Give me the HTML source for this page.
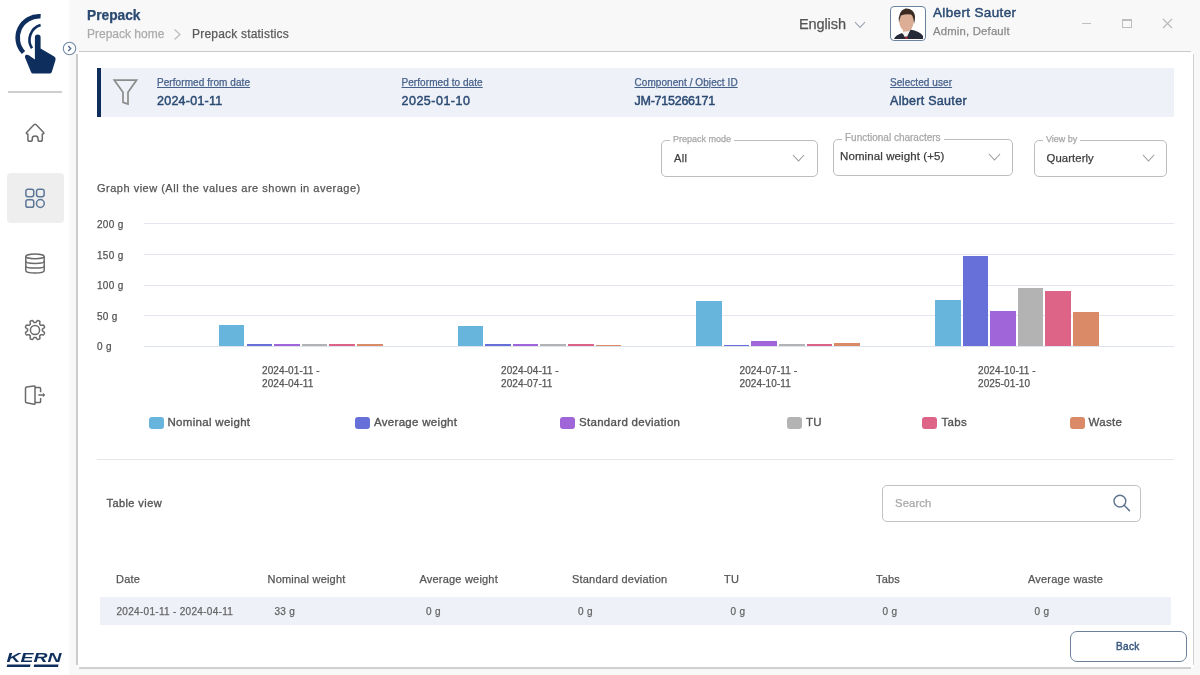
<!DOCTYPE html>
<html><head><meta charset="utf-8">
<style>
*{box-sizing:border-box;margin:0;padding:0}
html,body{width:1200px;height:675px;overflow:hidden}
body{position:relative;will-change:transform;-webkit-text-stroke-width:0.25px;background:#f8f8f8;font-family:"Liberation Sans",sans-serif;color:#555}
.a{position:absolute;white-space:nowrap;line-height:1}
#side{position:absolute;left:0;top:0;width:71px;height:675px;background:linear-gradient(to right,#fff 0,#fff 68px,#f8f8f8 71px)}
#card{position:absolute;left:77px;top:51.5px;width:1116.5px;height:616.5px;background:#fff}
.cl{position:absolute;background:#cbcbcb}
#fbar{position:absolute;left:97px;top:68px;width:1077px;height:49px;background:#eef1f8;border-left:4px solid #0e2d5c}
.fl{font-size:10px;color:#46618a;text-decoration:underline;text-decoration-thickness:0.8px;text-underline-offset:1px;letter-spacing:0.07px}
.fv{font-size:12.5px;color:#2b4a72;-webkit-text-stroke-width:0.45px;letter-spacing:0.3px}
.dd{position:absolute;border:1px solid #bdbdbd;border-radius:5px;background:#fff}
.ddl{position:absolute;font-size:9px;color:#a8a8a8;background:#fff;padding:0 3px;line-height:1}
.gl{position:absolute;left:144px;width:1030px;height:1px;background:#e3e6ee}
.yl{font-size:10px;color:#555;letter-spacing:0.3px;margin-top:1.2px}
.bar{position:absolute;width:25.6px}
.xl{font-size:10px;color:#555;line-height:13.5px;letter-spacing:0.1px;margin-top:1.5px}
.sw{position:absolute;width:15px;height:12px;border-radius:3px;top:417px}
.lg{font-size:11.5px;color:#555;-webkit-text-stroke-width:0.35px;letter-spacing:0.3px;margin-top:1.4px}
.th{font-size:11px;color:#555;letter-spacing:0.2px}
.td{font-size:10px;color:#666;letter-spacing:0.3px;margin-top:0.5px}
</style></head><body>
<div id="side"></div>

<!-- header -->
<div class="a" style="left:87px;top:9px;font-size:13.75px;font-weight:bold;color:#2b4a72">Prepack</div>
<div class="a" style="left:87px;top:27.5px;font-size:12px;color:#ababab">Prepack home</div>
<div class="a" style="left:192px;top:27.5px;font-size:12px;color:#5a5a5a;letter-spacing:0.2px">Prepack statistics</div>

<div class="a" style="left:799px;top:16.5px;font-size:14.5px;color:#555;letter-spacing:-0.1px">English</div>
<div class="a" style="left:933px;top:5.5px;font-size:13.5px;color:#2b4a72;-webkit-text-stroke-width:0.45px;letter-spacing:0.35px">Albert Sauter</div>
<div class="a" style="left:933px;top:25.5px;font-size:11.3px;color:#8a8a8a;letter-spacing:0.2px">Admin, Default</div>

<div id="card"></div>
<div class="cl" style="left:79px;top:50.5px;width:1111.5px;height:1.8px;background:#c9c9c9"></div>
<div class="cl" style="left:76px;top:53.5px;width:2px;height:611.5px"></div>
<div class="cl" style="left:1192.6px;top:54px;width:1.5px;height:611px;background:#d2d2d2"></div>
<div class="cl" style="left:79px;top:667.3px;width:1112px;height:1.7px;background:#d0d0d0"></div>
<div id="fbar"></div>


<!-- filter bar content -->
<svg class="a" style="left:112px;top:78px" width="27" height="28" viewBox="0 0 27 28"><path d="M2.2 2.1 H24.6 L16 14.3 V26 L11 24.3 V14.3 Z" fill="none" stroke="#8c8c8c" stroke-width="1.7" stroke-linejoin="miter"/></svg>
<div class="a fl" style="left:157px;top:78px">Performed from date</div>
<div class="a fv" style="left:157px;top:95px;letter-spacing:0.25px">2024-01-11</div>
<div class="a fl" style="left:401.5px;top:78px">Performed to date</div>
<div class="a fv" style="left:401.5px;top:95px;letter-spacing:0.5px">2025-01-10</div>
<div class="a fl" style="left:634.5px;top:78px">Component / Object ID</div>
<div class="a fv" style="left:634.5px;top:95px;letter-spacing:-0.25px">JM-715266171</div>
<div class="a fl" style="left:890px;top:78px">Selected user</div>
<div class="a fv" style="left:890px;top:95px">Albert Sauter</div>

<!-- dropdowns -->
<div class="dd" style="left:661px;top:140px;width:157px;height:37px"></div>
<div class="ddl" style="left:670px;top:135px">Prepack mode</div>
<div class="a" style="left:674px;top:153px;font-size:11px;color:#3d3d3d;letter-spacing:0.3px">All</div>
<svg class="a" style="left:792px;top:154px" width="13" height="8" viewBox="0 0 13 8"><path d="M1 1 L6.5 7 L12 1" fill="none" stroke="#999" stroke-width="1.1"/></svg>

<div class="dd" style="left:833px;top:139px;width:180px;height:37px"></div>
<div class="ddl" style="left:842px;top:133px;font-size:10px">Functional characters</div>
<div class="a" style="left:840px;top:151px;font-size:11.5px;color:#3d3d3d;letter-spacing:0.1px">Nominal weight (+5)</div>
<svg class="a" style="left:988px;top:153px" width="13" height="8" viewBox="0 0 13 8"><path d="M1 1 L6.5 7 L12 1" fill="none" stroke="#999" stroke-width="1.1"/></svg>

<div class="dd" style="left:1034px;top:140px;width:133px;height:37px"></div>
<div class="ddl" style="left:1043px;top:135px">View by</div>
<div class="a" style="left:1046.5px;top:153px;font-size:11.3px;color:#3d3d3d;letter-spacing:0.1px">Quarterly</div>
<svg class="a" style="left:1142px;top:154px" width="13" height="8" viewBox="0 0 13 8"><path d="M1 1 L6.5 7 L12 1" fill="none" stroke="#999" stroke-width="1.1"/></svg>

<!-- chart -->
<div class="a" style="left:97px;top:182.5px;font-size:11px;color:#555;letter-spacing:0.5px">Graph view (All the values are shown in average)</div>
<div class="gl" style="top:223px"></div>
<div class="gl" style="top:254px"></div>
<div class="gl" style="top:285px"></div>
<div class="gl" style="top:315px"></div>
<div class="gl" style="top:346px;background:#dde3ec"></div>
<div class="a yl" style="left:97px;top:219px">200 g</div>
<div class="a yl" style="left:97px;top:250px">150 g</div>
<div class="a yl" style="left:97px;top:280px">100 g</div>
<div class="a yl" style="left:97px;top:311px">50 g</div>
<div class="a yl" style="left:97px;top:341px">0 g</div>

<!-- bars -->
<div class="bar" style="left:218.90px;top:325.4px;height:20.6px;background:#67b5dc"></div>
<div class="bar" style="left:246.52px;top:344.2px;height:1.8px;background:#6670d8"></div>
<div class="bar" style="left:274.14px;top:344.2px;height:1.8px;background:#a065d8"></div>
<div class="bar" style="left:301.76px;top:344.2px;height:1.8px;background:#b3b3b3"></div>
<div class="bar" style="left:329.38px;top:344.2px;height:1.8px;background:#dd6487"></div>
<div class="bar" style="left:357.00px;top:344.2px;height:1.8px;background:#da8a67"></div>
<div class="bar" style="left:457.60px;top:325.7px;height:20.3px;background:#67b5dc"></div>
<div class="bar" style="left:485.22px;top:344.2px;height:1.8px;background:#6670d8"></div>
<div class="bar" style="left:512.84px;top:344.2px;height:1.8px;background:#a065d8"></div>
<div class="bar" style="left:540.46px;top:344.2px;height:1.8px;background:#b3b3b3"></div>
<div class="bar" style="left:568.08px;top:344.2px;height:1.8px;background:#dd6487"></div>
<div class="bar" style="left:595.70px;top:345.2px;height:0.8px;background:#da8a67"></div>
<div class="bar" style="left:696.20px;top:300.9px;height:45.1px;background:#67b5dc"></div>
<div class="bar" style="left:723.82px;top:344.6px;height:1.4px;background:#6670d8"></div>
<div class="bar" style="left:751.44px;top:341.2px;height:4.8px;background:#a065d8"></div>
<div class="bar" style="left:779.06px;top:344.2px;height:1.8px;background:#b3b3b3"></div>
<div class="bar" style="left:806.68px;top:344.2px;height:1.8px;background:#dd6487"></div>
<div class="bar" style="left:834.30px;top:343.3px;height:2.7px;background:#da8a67"></div>
<div class="bar" style="left:935.00px;top:299.7px;height:46.3px;background:#67b5dc"></div>
<div class="bar" style="left:962.62px;top:256.1px;height:89.9px;background:#6670d8"></div>
<div class="bar" style="left:990.24px;top:311.4px;height:34.6px;background:#a065d8"></div>
<div class="bar" style="left:1017.86px;top:287.9px;height:58.1px;background:#b3b3b3"></div>
<div class="bar" style="left:1045.48px;top:290.5px;height:55.5px;background:#dd6487"></div>
<div class="bar" style="left:1073.10px;top:312.2px;height:33.8px;background:#da8a67"></div>
<div class="a xl" style="left:262px;top:362px">2024-01-11 -<br>2024-04-11</div>
<div class="a xl" style="left:501px;top:362px">2024-04-11 -<br>2024-07-11</div>
<div class="a xl" style="left:739.5px;top:362px">2024-07-11 -<br>2024-10-11</div>
<div class="a xl" style="left:978px;top:362px">2024-10-11 -<br>2025-01-10</div>

<!-- legend -->
<div class="sw" style="left:148.5px;background:#67b5dc"></div>
<div class="a lg" style="left:167.5px;top:416px">Nominal weight</div>
<div class="sw" style="left:354.5px;background:#6670d8"></div>
<div class="a lg" style="left:374px;top:416px">Average weight</div>
<div class="sw" style="left:560px;background:#a065d8"></div>
<div class="a lg" style="left:579px;top:416px">Standard deviation</div>
<div class="sw" style="left:787px;background:#b3b3b3"></div>
<div class="a lg" style="left:806px;top:416px">TU</div>
<div class="sw" style="left:922px;background:#dd6487"></div>
<div class="a lg" style="left:941.5px;top:416px">Tabs</div>
<div class="sw" style="left:1069.5px;background:#da8a67"></div>
<div class="a lg" style="left:1088.5px;top:416px">Waste</div>
<div class="a" style="left:97px;top:459px;width:1077px;height:1px;background:#e6e6e6"></div>

<!-- table -->
<div class="a" style="left:106.5px;top:498px;font-size:11px;color:#555;-webkit-text-stroke-width:0.35px;letter-spacing:0.42px">Table view</div>
<div class="dd" style="left:882px;top:485px;width:259px;height:37px;border:1.3px solid #c2c2c2"></div>
<div class="a" style="left:895px;top:498px;font-size:11.3px;color:#a8a8a8;letter-spacing:0.1px">Search</div>
<svg class="a" style="left:1112px;top:494px" width="20" height="19" viewBox="0 0 20 19"><circle cx="7.9" cy="7.1" r="5.9" fill="none" stroke="#5f7590" stroke-width="1.4"/><path d="M12.1 11.3 L17.4 16.6" stroke="#5f7590" stroke-width="1.5" stroke-linecap="round"/></svg>

<div class="a th" style="left:116px;top:574px">Date</div>
<div class="a th" style="left:267.5px;top:574px">Nominal weight</div>
<div class="a th" style="left:419.5px;top:574px">Average weight</div>
<div class="a th" style="left:572px;top:574px">Standard deviation</div>
<div class="a th" style="left:724px;top:574px">TU</div>
<div class="a th" style="left:876px;top:574px">Tabs</div>
<div class="a th" style="left:1028px;top:574px">Average waste</div>
<div class="a" style="left:100px;top:597px;width:1071px;height:28px;background:#eef1f8"></div>
<div class="a td" style="left:116.5px;top:606px">2024-01-11 - 2024-04-11</div>
<div class="a td" style="left:274.5px;top:606px">33 g</div>
<div class="a td" style="left:426px;top:606px">0 g</div>
<div class="a td" style="left:578px;top:606px">0 g</div>
<div class="a td" style="left:730.5px;top:606px">0 g</div>
<div class="a td" style="left:882.5px;top:606px">0 g</div>
<div class="a td" style="left:1034.5px;top:606px">0 g</div>

<div class="a" style="left:1070px;top:631px;width:117px;height:31px;border:1.6px solid #6d8099;border-radius:7px;background:#fff"></div>
<div class="a" style="left:1116px;top:642px;font-size:10px;color:#3b5a80;-webkit-text-stroke-width:0.45px;letter-spacing:0.35px">Back</div>


<!-- sidebar content -->
<svg class="a" style="left:0;top:0" width="70" height="100" viewBox="0 0 70 100">
 <path d="M40.6 16.3 A21.5 21.5 0 0 0 23.5 52.5" fill="none" stroke="#0e2f5e" stroke-width="4.5"/>
 <path d="M40.6 25 A15.5 15.5 0 0 0 32 48.3" fill="none" stroke="#0e2f5e" stroke-width="2.6"/>
 <path d="M34.9 37.2 Q34.9 34.4 37.75 34.4 Q40.6 34.4 40.6 37.2 V48.5 L54.2 56.5 Q56.2 57.8 55.5 60 L51.8 72 Q51.2 73.5 49.5 73.5 H33 Q31.5 73.5 31 72 L25 57.5 Q24.5 55.5 26.2 54.8 Q27.6 54.3 28.8 55.3 L34.9 59.5 Z" fill="#0e2f5e"/>
</svg>
<div class="a" style="left:8px;top:91px;width:54px;height:1.5px;background:#cfcfcf"></div>

<svg class="a" style="left:24px;top:122px" width="22" height="22" viewBox="0 0 22 22"><path d="M3.9 12 Q1.6 12 2.6 10.4 L10 2.8 Q11.1 1.8 12.2 2.8 L19.6 10.4 Q20.6 12 18.3 12 V17.4 Q18.3 19.3 16.4 19.3 H15.9 Q14 19.3 14 17.4 V16.3 Q14 13.9 11.15 13.9 Q8.3 13.9 8.3 16.3 V17.4 Q8.3 19.3 6.4 19.3 H5.8 Q3.9 19.3 3.9 17.4 Z" fill="none" stroke="#6a6a6a" stroke-width="1.5" stroke-linejoin="round"/></svg>

<div class="a" style="left:6.5px;top:173px;width:57px;height:50px;background:#eeeeee;border-radius:4px"></div>
<svg class="a" style="left:24px;top:187px" width="22" height="23" viewBox="0 0 22 23"><g fill="none" stroke="#5c7798" stroke-width="1.5"><rect x="1.85" y="2.15" width="7.9" height="7.6" rx="2.2"/><rect x="12.55" y="2.15" width="7.6" height="7.6" rx="2.2"/><rect x="1.85" y="12.75" width="7.9" height="7.6" rx="2.2"/><circle cx="16.35" cy="16.5" r="3.9"/></g></svg>

<svg class="a" style="left:24px;top:253px" width="22" height="22" viewBox="0 0 22 22"><g fill="none" stroke="#6a6a6a" stroke-width="1.5"><ellipse cx="11" cy="3.4" rx="9.2" ry="2.3"/><path d="M1.8 3.4 V17.6 Q1.8 20.1 11 20.1 Q20.2 20.1 20.2 17.6 V3.4"/><path d="M1.8 8.3 Q1.8 10.5 11 10.5 Q20.2 10.5 20.2 8.3"/><path d="M1.8 12.9 Q1.8 15.1 11 15.1 Q20.2 15.1 20.2 12.9"/></g></svg>

<svg class="a" style="left:23px;top:317.5px" width="24" height="24" viewBox="0 0 24 24"><g fill="none" stroke="#6a6a6a" stroke-width="1.5" stroke-linejoin="round"><path d="M19.45 12.00 L19.45 12.20 L19.44 12.39 L19.43 12.58 L19.41 12.78 L19.57 13.00 L19.94 13.26 L20.34 13.54 L20.73 13.86 L21.10 14.18 L21.43 14.53 L21.54 14.83 L21.46 15.07 L21.38 15.32 L21.29 15.57 L21.19 15.81 L21.09 16.05 L20.98 16.28 L20.87 16.52 L20.74 16.75 L20.45 16.88 L19.98 16.89 L19.48 16.86 L18.99 16.80 L18.51 16.73 L18.06 16.65 L17.79 16.69 L17.67 16.84 L17.54 16.99 L17.40 17.13 L17.27 17.27 L17.13 17.40 L16.99 17.54 L16.84 17.67 L16.69 17.79 L16.65 18.06 L16.73 18.51 L16.80 18.99 L16.86 19.48 L16.89 19.98 L16.88 20.45 L16.75 20.74 L16.52 20.87 L16.28 20.98 L16.05 21.09 L15.81 21.19 L15.57 21.29 L15.32 21.38 L15.07 21.46 L14.83 21.54 L14.53 21.43 L14.18 21.10 L13.86 20.73 L13.54 20.34 L13.26 19.94 L13.00 19.57 L12.78 19.41 L12.58 19.43 L12.39 19.44 L12.20 19.45 L12.00 19.45 L11.80 19.45 L11.61 19.44 L11.42 19.43 L11.22 19.41 L11.00 19.57 L10.74 19.94 L10.46 20.34 L10.14 20.73 L9.82 21.10 L9.47 21.43 L9.17 21.54 L8.93 21.46 L8.68 21.38 L8.43 21.29 L8.19 21.19 L7.95 21.09 L7.72 20.98 L7.48 20.87 L7.25 20.74 L7.12 20.45 L7.11 19.98 L7.14 19.48 L7.20 18.99 L7.27 18.51 L7.35 18.06 L7.31 17.79 L7.16 17.67 L7.01 17.54 L6.87 17.40 L6.73 17.27 L6.60 17.13 L6.46 16.99 L6.33 16.84 L6.21 16.69 L5.94 16.65 L5.49 16.73 L5.01 16.80 L4.52 16.86 L4.02 16.89 L3.55 16.88 L3.26 16.75 L3.13 16.52 L3.02 16.28 L2.91 16.05 L2.81 15.81 L2.71 15.57 L2.62 15.32 L2.54 15.07 L2.46 14.83 L2.57 14.53 L2.90 14.18 L3.27 13.86 L3.66 13.54 L4.06 13.26 L4.43 13.00 L4.59 12.78 L4.57 12.58 L4.56 12.39 L4.55 12.20 L4.55 12.00 L4.55 11.80 L4.56 11.61 L4.57 11.42 L4.59 11.22 L4.43 11.00 L4.06 10.74 L3.66 10.46 L3.27 10.14 L2.90 9.82 L2.57 9.47 L2.46 9.17 L2.54 8.93 L2.62 8.68 L2.71 8.43 L2.81 8.19 L2.91 7.95 L3.02 7.72 L3.13 7.48 L3.26 7.25 L3.55 7.12 L4.02 7.11 L4.52 7.14 L5.01 7.20 L5.49 7.27 L5.94 7.35 L6.21 7.31 L6.33 7.16 L6.46 7.01 L6.60 6.87 L6.73 6.73 L6.87 6.60 L7.01 6.46 L7.16 6.33 L7.31 6.21 L7.35 5.94 L7.27 5.49 L7.20 5.01 L7.14 4.52 L7.11 4.02 L7.12 3.55 L7.25 3.26 L7.48 3.13 L7.72 3.02 L7.95 2.91 L8.19 2.81 L8.43 2.71 L8.68 2.62 L8.93 2.54 L9.17 2.46 L9.47 2.57 L9.82 2.90 L10.14 3.27 L10.46 3.66 L10.74 4.06 L11.00 4.43 L11.22 4.59 L11.42 4.57 L11.61 4.56 L11.80 4.55 L12.00 4.55 L12.20 4.55 L12.39 4.56 L12.58 4.57 L12.78 4.59 L13.00 4.43 L13.26 4.06 L13.54 3.66 L13.86 3.27 L14.18 2.90 L14.53 2.57 L14.83 2.46 L15.07 2.54 L15.32 2.62 L15.57 2.71 L15.81 2.81 L16.05 2.91 L16.28 3.02 L16.52 3.13 L16.75 3.26 L16.88 3.55 L16.89 4.02 L16.86 4.52 L16.80 5.01 L16.73 5.49 L16.65 5.94 L16.69 6.21 L16.84 6.33 L16.99 6.46 L17.13 6.60 L17.27 6.73 L17.40 6.87 L17.54 7.01 L17.67 7.16 L17.79 7.31 L18.06 7.35 L18.51 7.27 L18.99 7.20 L19.48 7.14 L19.98 7.11 L20.45 7.12 L20.74 7.25 L20.87 7.48 L20.98 7.72 L21.09 7.95 L21.19 8.19 L21.29 8.43 L21.38 8.68 L21.46 8.93 L21.54 9.17 L21.43 9.47 L21.10 9.82 L20.73 10.14 L20.34 10.46 L19.94 10.74 L19.57 11.00 L19.41 11.22 L19.43 11.42 L19.44 11.61 L19.45 11.80 Z"/><circle cx="12" cy="12" r="4.6"/></g></svg>

<svg class="a" style="left:24px;top:384px" width="23" height="22" viewBox="0 0 23 22"><g fill="none" stroke="#6a6a6a" stroke-width="1.5" stroke-linejoin="round"><path d="M1.5 4.2 Q1.5 3.2 2.5 3 L10 1.9 Q11 1.8 11 2.8 V19.4 Q11 20.4 10 20.2 L2.5 18.7 Q1.5 18.5 1.5 17.5 Z"/><path d="M11 3.6 H15.5 Q16.6 3.6 16.6 4.7 V8.2 M16.6 13.9 V17.5 Q16.6 18.6 15.5 18.6 H11"/><path d="M14.3 11 H19.2"/></g><path d="M18.8 8.8 L21.3 11 L18.8 13.2 Z" fill="#6a6a6a"/></svg>

<svg class="a" style="left:4px;top:650px" width="62" height="20" viewBox="0 0 62 20">
 <text x="2.5" y="11.8" font-family="Liberation Sans" font-weight="bold" font-style="italic" font-size="12.5" fill="#0e2f5e" textLength="55" lengthAdjust="spacingAndGlyphs">KERN</text>
 <path d="M3.3 14.4 H26.5 L26 17 H2.7 Z M30.2 14.4 H54.5 L54 17 H29.7 Z" fill="#0e2f5e"/>
</svg>

<svg class="a" style="left:62px;top:41px" width="15" height="15" viewBox="0 0 15 15"><circle cx="7.5" cy="7.5" r="6.2" fill="#fff" stroke="#7089a5" stroke-width="1.1"/><path d="M6.3 5 L8.7 7.5 L6.3 10" fill="none" stroke="#55708f" stroke-width="1.4"/></svg>

<!-- header extras -->
<svg class="a" style="left:173px;top:27.8px" width="9" height="13" viewBox="0 0 9 13"><path d="M1.5 1.5 L7 6.5 L1.5 11.5" fill="none" stroke="#b8b8b8" stroke-width="1.1"/></svg>
<svg class="a" style="left:854px;top:21px" width="12" height="8" viewBox="0 0 12 8"><path d="M1 1.2 L6 6.5 L11 1.2" fill="none" stroke="#9aa6b8" stroke-width="1.1"/></svg>

<div class="a" style="left:890px;top:5.5px;width:35.5px;height:35.5px;border:1.8px solid #6a84a0;border-radius:4px;background:#fff;overflow:hidden">
 <svg width="32" height="32" viewBox="0 0 32 32" style="position:absolute;left:0;top:0">
  <path d="M12 20 H19.5 V28 H12 Z" fill="#d5a58c"/>
  <path d="M3 32 Q4.5 28 11 26 L15 31 L19 22.5 Q29 24 32 29 V32 Z" fill="#262b3a"/>
  <path d="M11.5 25.5 L15 32 L19.5 22.5 L18 22 Q15.5 25 12.5 24.5 Z" fill="#f2f2f2"/>
  <path d="M14 29.5 L16.5 29.5 L17 32 L13.8 32 Z" fill="#8a2a35"/>
  <ellipse cx="15.5" cy="14.5" rx="7.2" ry="10" fill="#dcae96"/>
  <path d="M8 16 Q6.5 4 14.5 1.5 Q22.5 1 24 9 Q24.2 13 23 17 Q22.5 9 20 7.5 Q15 6.5 10 8.5 Q8.8 11 8 16 Z" fill="#3b2b22"/>
 </svg>
</div>

<div class="a" style="left:1081.5px;top:22.5px;width:9px;height:1.2px;background:#c0c0c0"></div>
<div class="a" style="left:1122px;top:18.5px;width:9.5px;height:9.5px;border:1.1px solid #bdbdbd;border-top-width:2px"></div>
<svg class="a" style="left:1162px;top:18px" width="11" height="11" viewBox="0 0 11 11"><path d="M1 1 L10 10 M10 1 L1 10" stroke="#b8b8b8" stroke-width="1.1"/></svg>

</body></html>
